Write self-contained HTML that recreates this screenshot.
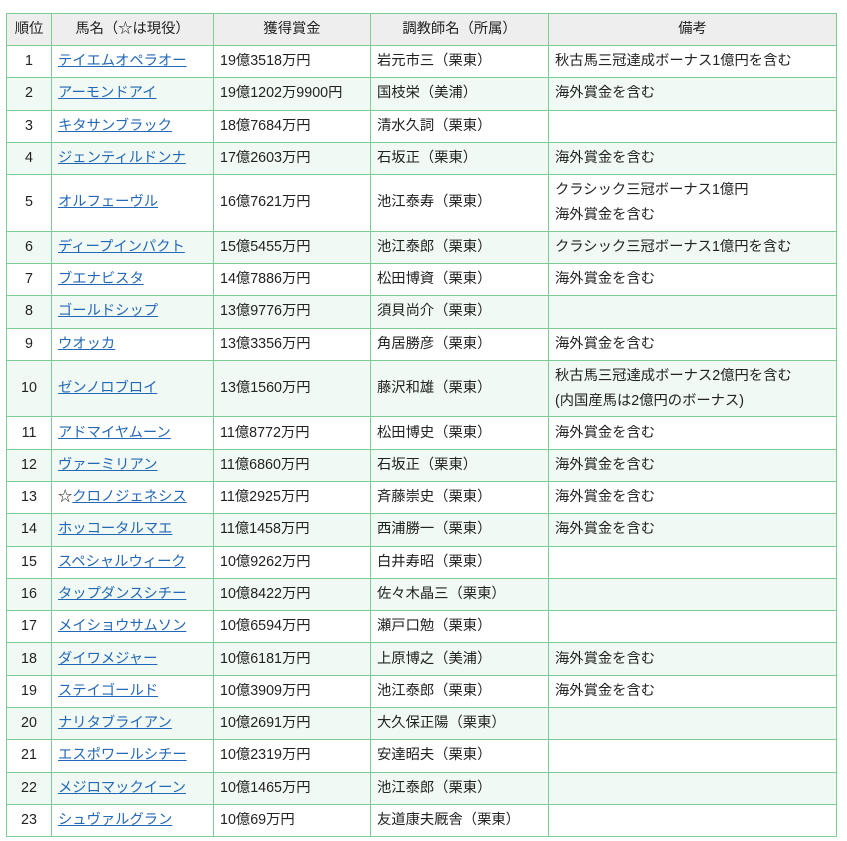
<!DOCTYPE html>
<html><head><meta charset="utf-8"><style>
html,body{margin:0;padding:0;background:#fff;width:847px;height:841px;overflow:hidden}
table{position:absolute;left:6px;top:13px;border-collapse:collapse;width:830px;table-layout:fixed;font-family:"Liberation Sans","Noto Sans CJK JP",sans-serif;font-size:14.3px;color:#222}
td,th{border:1px solid #7dcc95;padding:0 6px;height:31.3px;line-height:25px;text-align:left;vertical-align:middle;white-space:nowrap;overflow:hidden}
th{background:#eeeeee;font-weight:normal;text-align:center;height:31px}
td:first-child{text-align:center}
tr:nth-child(odd) td{background:#f0f9f3}
tr.t td{height:55.5px}
a{color:#2468b8;text-decoration:underline}
</style></head><body>
<table>
<colgroup><col style="width:45px"><col style="width:162px"><col style="width:157px"><col style="width:178px"><col style="width:288px"></colgroup>
<tr><th>順位</th><th>馬名（☆は現役）</th><th>獲得賞金</th><th>調教師名（所属）</th><th>備考</th></tr>
<tr><td>1</td><td><a>テイエムオペラオー</a></td><td>19億3518万円</td><td>岩元市三（栗東）</td><td>秋古馬三冠達成ボーナス1億円を含む</td></tr>
<tr><td>2</td><td><a>アーモンドアイ</a></td><td>19億1202万9900円</td><td>国枝栄（美浦）</td><td>海外賞金を含む</td></tr>
<tr><td>3</td><td><a>キタサンブラック</a></td><td>18億7684万円</td><td>清水久詞（栗東）</td><td></td></tr>
<tr><td>4</td><td><a>ジェンティルドンナ</a></td><td>17億2603万円</td><td>石坂正（栗東）</td><td>海外賞金を含む</td></tr>
<tr class="t"><td>5</td><td><a>オルフェーヴル</a></td><td>16億7621万円</td><td>池江泰寿（栗東）</td><td>クラシック三冠ボーナス1億円<br>海外賞金を含む</td></tr>
<tr><td>6</td><td><a>ディープインパクト</a></td><td>15億5455万円</td><td>池江泰郎（栗東）</td><td>クラシック三冠ボーナス1億円を含む</td></tr>
<tr><td>7</td><td><a>ブエナビスタ</a></td><td>14億7886万円</td><td>松田博資（栗東）</td><td>海外賞金を含む</td></tr>
<tr><td>8</td><td><a>ゴールドシップ</a></td><td>13億9776万円</td><td>須貝尚介（栗東）</td><td></td></tr>
<tr><td>9</td><td><a>ウオッカ</a></td><td>13億3356万円</td><td>角居勝彦（栗東）</td><td>海外賞金を含む</td></tr>
<tr class="t"><td>10</td><td><a>ゼンノロブロイ</a></td><td>13億1560万円</td><td>藤沢和雄（栗東）</td><td>秋古馬三冠達成ボーナス2億円を含む<br>(内国産馬は2億円のボーナス)</td></tr>
<tr><td>11</td><td><a>アドマイヤムーン</a></td><td>11億8772万円</td><td>松田博史（栗東）</td><td>海外賞金を含む</td></tr>
<tr><td>12</td><td><a>ヴァーミリアン</a></td><td>11億6860万円</td><td>石坂正（栗東）</td><td>海外賞金を含む</td></tr>
<tr><td>13</td><td>☆<a>クロノジェネシス</a></td><td>11億2925万円</td><td>斉藤崇史（栗東）</td><td>海外賞金を含む</td></tr>
<tr><td>14</td><td><a>ホッコータルマエ</a></td><td>11億1458万円</td><td>西浦勝一（栗東）</td><td>海外賞金を含む</td></tr>
<tr><td>15</td><td><a>スペシャルウィーク</a></td><td>10億9262万円</td><td>白井寿昭（栗東）</td><td></td></tr>
<tr><td>16</td><td><a>タップダンスシチー</a></td><td>10億8422万円</td><td>佐々木晶三（栗東）</td><td></td></tr>
<tr><td>17</td><td><a>メイショウサムソン</a></td><td>10億6594万円</td><td>瀬戸口勉（栗東）</td><td></td></tr>
<tr><td>18</td><td><a>ダイワメジャー</a></td><td>10億6181万円</td><td>上原博之（美浦）</td><td>海外賞金を含む</td></tr>
<tr><td>19</td><td><a>ステイゴールド</a></td><td>10億3909万円</td><td>池江泰郎（栗東）</td><td>海外賞金を含む</td></tr>
<tr><td>20</td><td><a>ナリタブライアン</a></td><td>10億2691万円</td><td>大久保正陽（栗東）</td><td></td></tr>
<tr><td>21</td><td><a>エスポワールシチー</a></td><td>10億2319万円</td><td>安達昭夫（栗東）</td><td></td></tr>
<tr><td>22</td><td><a>メジロマックイーン</a></td><td>10億1465万円</td><td>池江泰郎（栗東）</td><td></td></tr>
<tr><td>23</td><td><a>シュヴァルグラン</a></td><td>10億69万円</td><td>友道康夫厩舎（栗東）</td><td></td></tr>
</table>
</body></html>
